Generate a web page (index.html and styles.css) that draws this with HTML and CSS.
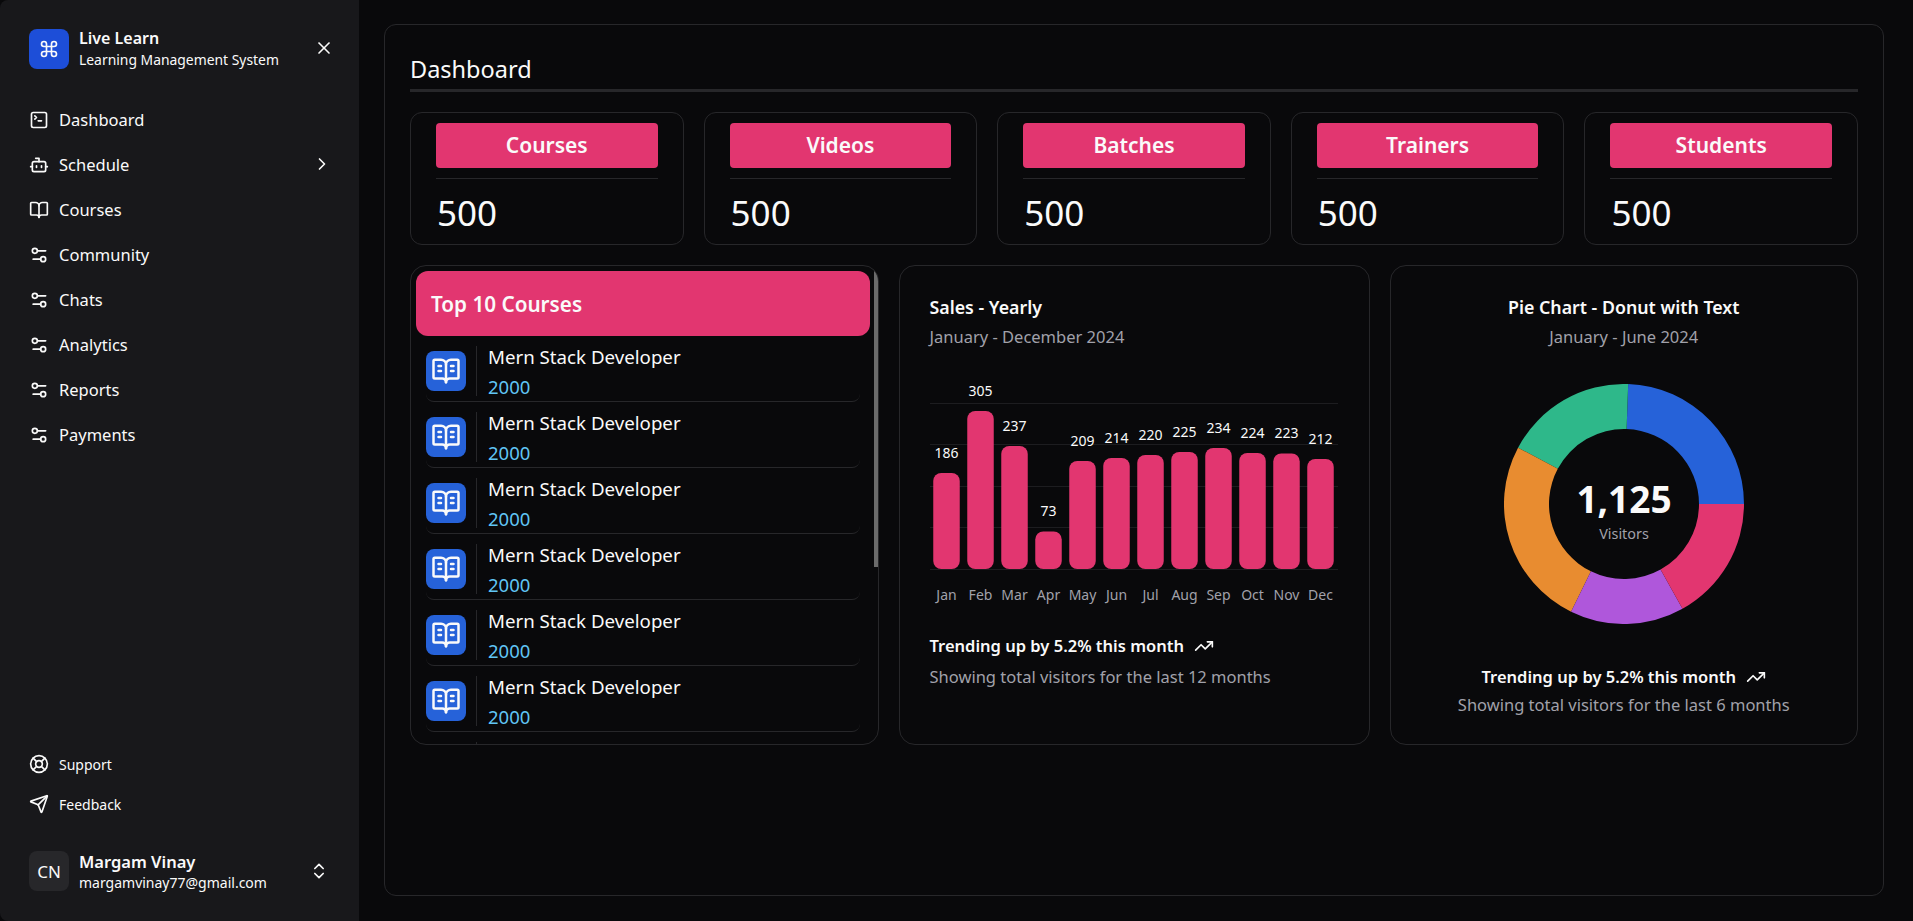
FILE: index.html
```html
<!DOCTYPE html>
<html lang="en">
<head>
<meta charset="utf-8">
<title>Live Learn - Dashboard</title>
<link rel="stylesheet" href="styles.css">
</head>
<body>
<svg class="sprite" aria-hidden="true">
  <symbol id="i-command" viewBox="0 0 24 24"><path d="M15 6v12a3 3 0 1 0 3-3H6a3 3 0 1 0 3 3V6a3 3 0 1 0-3 3h12a3 3 0 1 0-3-3"/></symbol>
  <symbol id="i-x" viewBox="0 0 24 24"><path d="M18 6 6 18"/><path d="m6 6 12 12"/></symbol>
  <symbol id="i-terminal" viewBox="0 0 24 24"><path d="m7 11 2-2-2-2"/><path d="M11 13h4"/><rect width="18" height="18" x="3" y="3" rx="2"/></symbol>
  <symbol id="i-bot" viewBox="0 0 24 24"><path d="M12 8V4H8"/><rect width="16" height="12" x="4" y="8" rx="2"/><path d="M2 14h2"/><path d="M20 14h2"/><path d="M15 13v2"/><path d="M9 13v2"/></symbol>
  <symbol id="i-book" viewBox="0 0 24 24"><path d="M12 7v14"/><path d="M3 18a1 1 0 0 1-1-1V4a1 1 0 0 1 1-1h5a4 4 0 0 1 4 4 4 4 0 0 1 4-4h5a1 1 0 0 1 1 1v13a1 1 0 0 1-1 1h-6a3 3 0 0 0-3 3 3 3 0 0 0-3-3z"/></symbol>
  <symbol id="i-booktext" viewBox="0 0 24 24"><path d="M12 7v14"/><path d="M16 12h2"/><path d="M16 8h2"/><path d="M3 18a1 1 0 0 1-1-1V4a1 1 0 0 1 1-1h5a4 4 0 0 1 4 4 4 4 0 0 1 4-4h5a1 1 0 0 1 1 1v13a1 1 0 0 1-1 1h-6a3 3 0 0 0-3 3 3 3 0 0 0-3-3z"/><path d="M6 12h2"/><path d="M6 8h2"/></symbol>
  <symbol id="i-settings" viewBox="0 0 24 24"><path d="M20 7h-9"/><path d="M14 17H5"/><circle cx="17" cy="17" r="3"/><circle cx="7" cy="7" r="3"/></symbol>
  <symbol id="i-right" viewBox="0 0 24 24"><path d="m9 18 6-6-6-6"/></symbol>
  <symbol id="i-buoy" viewBox="0 0 24 24"><circle cx="12" cy="12" r="10"/><path d="m4.93 4.93 4.24 4.24"/><path d="m14.83 9.17 4.24-4.24"/><path d="m14.83 14.83 4.24 4.24"/><path d="m9.17 14.83-4.24 4.24"/><circle cx="12" cy="12" r="4"/></symbol>
  <symbol id="i-send" viewBox="0 0 24 24"><path d="M14.536 21.686a.5.5 0 0 0 .937-.024l6.5-19a.496.496 0 0 0-.635-.635l-19 6.5a.5.5 0 0 0-.024.937l7.93 3.18a2 2 0 0 1 1.112 1.11z"/><path d="m21.854 2.147-10.94 10.939"/></symbol>
  <symbol id="i-updown" viewBox="0 0 24 24"><path d="m7 15 5 5 5-5"/><path d="m7 9 5-5 5 5"/></symbol>
  <symbol id="i-trend" viewBox="0 0 24 24"><path d="M16 7h6v6"/><path d="m22 7-8.5 8.5-5-5L2 17"/></symbol>
</svg>

<div class="app">
  <aside class="sidebar">
    <header class="brand">
      <span class="brand-logo"><svg class="ico ico-20"><use href="#i-command"/></svg></span>
      <div class="brand-text">
        <strong class="who-title">Live Learn</strong>
        <span class="who-sub">Learning Management System</span>
      </div>
      <svg class="ico ico-20 brand-close"><use href="#i-x"/></svg>
    </header>

    <nav class="nav">
      <a class="nav-item"><svg class="ico ico-20"><use href="#i-terminal"/></svg>Dashboard</a>
      <a class="nav-item"><svg class="ico ico-20"><use href="#i-bot"/></svg>Schedule<svg class="ico ico-20 nav-arrow"><use href="#i-right"/></svg></a>
      <a class="nav-item"><svg class="ico ico-20"><use href="#i-book"/></svg>Courses</a>
      <a class="nav-item"><svg class="ico ico-20"><use href="#i-settings"/></svg>Community</a>
      <a class="nav-item"><svg class="ico ico-20"><use href="#i-settings"/></svg>Chats</a>
      <a class="nav-item"><svg class="ico ico-20"><use href="#i-settings"/></svg>Analytics</a>
      <a class="nav-item"><svg class="ico ico-20"><use href="#i-settings"/></svg>Reports</a>
      <a class="nav-item"><svg class="ico ico-20"><use href="#i-settings"/></svg>Payments</a>
    </nav>

    <div class="nav-secondary">
      <a class="nav-small"><svg class="ico ico-20"><use href="#i-buoy"/></svg>Support</a>
      <a class="nav-small"><svg class="ico ico-20"><use href="#i-send"/></svg>Feedback</a>
    </div>

    <footer class="user">
      <span class="avatar">CN</span>
      <div class="brand-text user-text">
        <strong class="who-title user-name">Margam Vinay</strong>
        <span class="who-sub user-mail">margamvinay77@gmail.com</span>
      </div>
      <svg class="ico ico-20 user-toggle"><use href="#i-updown"/></svg>
    </footer>
  </aside>

  <main class="main">
    <section class="panel">
      <h1 class="page-title">Dashboard</h1>

      <div class="stats">
        <article class="stat"><h2 class="stat-label">Courses</h2><p class="stat-value">500</p></article>
        <article class="stat"><h2 class="stat-label">Videos</h2><p class="stat-value">500</p></article>
        <article class="stat"><h2 class="stat-label">Batches</h2><p class="stat-value">500</p></article>
        <article class="stat"><h2 class="stat-label">Trainers</h2><p class="stat-value">500</p></article>
        <article class="stat"><h2 class="stat-label">Students</h2><p class="stat-value">500</p></article>
      </div>

      <div class="widgets">
        <article class="card courses">
          <span class="scroll-thumb"></span>
          <h2 class="courses-head">Top 10 Courses</h2>
          <ul class="course-list">
            <li class="course"><span class="course-icon"><svg class="ico ico-30"><use href="#i-booktext"/></svg></span><div class="course-text"><span class="course-name">Mern Stack Developer</span><span class="course-count">2000</span></div></li>
            <li class="course"><span class="course-icon"><svg class="ico ico-30"><use href="#i-booktext"/></svg></span><div class="course-text"><span class="course-name">Mern Stack Developer</span><span class="course-count">2000</span></div></li>
            <li class="course"><span class="course-icon"><svg class="ico ico-30"><use href="#i-booktext"/></svg></span><div class="course-text"><span class="course-name">Mern Stack Developer</span><span class="course-count">2000</span></div></li>
            <li class="course"><span class="course-icon"><svg class="ico ico-30"><use href="#i-booktext"/></svg></span><div class="course-text"><span class="course-name">Mern Stack Developer</span><span class="course-count">2000</span></div></li>
            <li class="course"><span class="course-icon"><svg class="ico ico-30"><use href="#i-booktext"/></svg></span><div class="course-text"><span class="course-name">Mern Stack Developer</span><span class="course-count">2000</span></div></li>
            <li class="course"><span class="course-icon"><svg class="ico ico-30"><use href="#i-booktext"/></svg></span><div class="course-text"><span class="course-name">Mern Stack Developer</span><span class="course-count">2000</span></div></li>
            <li class="course"><span class="course-icon"></span><div class="course-text"></div></li>
          </ul>
        </article>

        <article class="card chart-card">
          <h2 class="chart-title">Sales - Yearly</h2>
          <p class="chart-sub">January - December 2024</p>
          <svg class="bars" viewBox="0 0 409 265" width="409" height="265">
            <g class="grid">
              <path d="M0 43.5H408"/><path d="M0 84.5H408"/><path d="M0 126.5H408"/><path d="M0 167.5H408"/><path d="M0 209.5H408"/>
            </g>
            <g class="bar">
              <rect x="3.25" y="113" width="26.5" height="96" rx="8"/>
              <rect x="37.25" y="51" width="26.5" height="158" rx="8"/>
              <rect x="71.25" y="86" width="26.5" height="123" rx="8"/>
              <rect x="105.25" y="171.5" width="26.5" height="37.5" rx="8"/>
              <rect x="139.25" y="101" width="26.5" height="108" rx="8"/>
              <rect x="173.25" y="98" width="26.5" height="111" rx="8"/>
              <rect x="207.25" y="95" width="26.5" height="114" rx="8"/>
              <rect x="241.25" y="92" width="26.5" height="117" rx="8"/>
              <rect x="275.25" y="88" width="26.5" height="121" rx="8"/>
              <rect x="309.25" y="93" width="26.5" height="116" rx="8"/>
              <rect x="343.25" y="93.5" width="26.5" height="115.5" rx="8"/>
              <rect x="377.25" y="99" width="26.5" height="110" rx="8"/>
            </g>
            <g class="bar-value">
              <text x="16.5" y="98">186</text><text x="50.5" y="36">305</text><text x="84.5" y="71">237</text><text x="118.5" y="156">73</text>
              <text x="152.5" y="86">209</text><text x="186.5" y="83">214</text><text x="220.5" y="80">220</text><text x="254.5" y="77">225</text>
              <text x="288.5" y="73">234</text><text x="322.5" y="78">224</text><text x="356.5" y="78">223</text><text x="390.5" y="84">212</text>
            </g>
            <g class="bar-month">
              <text x="16.5" y="240">Jan</text><text x="50.5" y="240">Feb</text><text x="84.5" y="240">Mar</text><text x="118.5" y="240">Apr</text>
              <text x="152.5" y="240">May</text><text x="186.5" y="240">Jun</text><text x="220.5" y="240">Jul</text><text x="254.5" y="240">Aug</text>
              <text x="288.5" y="240">Sep</text><text x="322.5" y="240">Oct</text><text x="356.5" y="240">Nov</text><text x="390.5" y="240">Dec</text>
            </g>
          </svg>
          <p class="trend">Trending up by 5.2% this month <svg class="ico ico-20"><use href="#i-trend"/></svg></p>
          <p class="chart-sub">Showing total visitors for the last 12 months</p>
        </article>

        <article class="card chart-card pie-card">
          <h2 class="chart-title">Pie Chart - Donut with Text</h2>
          <p class="chart-sub">January - June 2024</p>
          <svg class="donut" viewBox="-120 -120 240 240" width="240" height="240">
            <path class="seg-blue" d="M120 0A120 120 0 0 0 4.19 -119.93L2.62 -74.95A75 75 0 0 1 75 0Z"/>
            <path class="seg-green" d="M4.19 -119.93A120 120 0 0 0 -105.96 -56.34L-66.22 -35.21A75 75 0 0 1 2.62 -74.95Z"/>
            <path class="seg-orange" d="M-105.96 -56.34A120 120 0 0 0 -52.91 107.71L-33.07 67.32A75 75 0 0 1 -66.22 -35.21Z"/>
            <path class="seg-purple" d="M-52.91 107.71A120 120 0 0 0 58.5 104.78L36.56 65.49A75 75 0 0 1 -33.07 67.32Z"/>
            <path class="seg-pink" d="M58.5 104.78A120 120 0 0 0 120 0L75 0A75 75 0 0 1 36.56 65.49Z"/>
            <text class="donut-num" x="0" y="9">1,125</text>
            <text class="donut-label" x="0" y="35">Visitors</text>
          </svg>
          <p class="trend">Trending up by 5.2% this month <svg class="ico ico-20"><use href="#i-trend"/></svg></p>
          <p class="chart-sub">Showing total visitors for the last 6 months</p>
        </article>
      </div>
    </section>
  </main>
</div>
</body>
</html>
```

FILE: styles.css
```css
* { box-sizing: border-box; }

html, body { height: 100%; }

body {
  margin: 0;
  background: #09090b;
  color: #fafafa;
  font-family: "Noto Sans", "Open Sans", sans-serif;
  overflow: hidden;
}

h1, h2, p, ul { margin: 0; padding: 0; }
ul { list-style: none; }

.sprite { display: none; }

.ico {
  fill: none;
  stroke: currentColor;
  stroke-width: 2;
  stroke-linecap: round;
  stroke-linejoin: round;
  flex: none;
}
.ico-20 { width: 20px; height: 20px; }
.ico-30 { width: 30px; height: 30px; }

.app { display: flex; height: 921px; }

/* Sidebar */
.sidebar {
  width: 359px;
  flex: none;
  display: flex;
  flex-direction: column;
  background: #18181b;
  border-radius: 8px 0 0 8px;
  padding: 28px 29px 30px;
}

.brand, .user { display: flex; align-items: center; }

.brand-logo, .avatar {
  width: 40px;
  height: 40px;
  border-radius: 8px;
  display: flex;
  align-items: center;
  justify-content: center;
  flex: none;
}
.brand-logo { background: #1d4ed8; }
.avatar { background: #27272a; font-size: 17px; }

.brand-text { margin-left: 10px; display: flex; flex-direction: column; }
.who-title { font-size: 16px; line-height: 21px; font-weight: 600; }
.who-sub { font-size: 13.9px; line-height: 21px; }
.user-text { padding-top: 1px; }
.user-name { font-size: 16.5px; }
.user-mail { font-size: 14px; }

.brand-close { margin-left: auto; margin-right: -4px; margin-top: -2px; }

.nav { margin-top: 27px; display: flex; flex-direction: column; }
.nav-item {
  height: 45px;
  display: flex;
  align-items: center;
  gap: 10px;
  font-size: 16.5px;
}
.nav-arrow { margin-left: auto; margin-right: -2px; margin-top: -2px; }

.nav-secondary { margin-top: auto; display: flex; flex-direction: column; }
.nav-small {
  height: 40px;
  display: flex;
  align-items: center;
  gap: 10px;
  font-size: 14px;
}

.user { margin-top: 27px; height: 40px; }
.user-toggle { margin-left: auto; margin-right: 1px; }

/* Main */
.main { flex: 1; min-width: 0; padding: 24px 29px 25px 25px; }

.panel {
  height: 100%;
  border: 1px solid #27272a;
  border-radius: 12px;
  padding: 25px 25px 0;
}

.page-title {
  font-size: 23.5px;
  line-height: 34px;
  font-weight: 400;
  height: 40px;
  border-bottom: 3px solid #27272a;
  margin-top: 2px;
}

.stats {
  margin-top: 20px;
  display: grid;
  grid-template-columns: repeat(5, 1fr);
  gap: 20px;
}
.stat {
  height: 133px;
  border: 1px solid #27272a;
  border-radius: 12px;
  padding: 10px 25px 0;
}
.stat-label {
  height: 45px;
  border-radius: 4px;
  background: #e23670;
  font-size: 21px;
  font-weight: 600;
  line-height: 45px;
  text-align: center;
}
.stat-value {
  margin-top: 10px;
  padding: 10px 1px 0;
  border-top: 1px solid #27272a;
  font-size: 35px;
  line-height: 48px;
}

.widgets {
  margin-top: 20px;
  display: grid;
  grid-template-columns: repeat(3, 1fr);
  gap: 20px;
}

.card {
  height: 480px;
  border: 1px solid #27272a;
  border-radius: 16px;
}

.courses {
  position: relative;
  padding: 5px 8px 0 5px;
  overflow: hidden;
}
.scroll-thumb {
  position: absolute;
  top: 0;
  right: 0;
  width: 4px;
  height: 301px;
  background: #6b6b6b;
}

.courses-head {
  height: 65px;
  border-radius: 12px;
  background: #e23670;
  padding: 0 15px;
  font-size: 20.7px;
  line-height: 67px;
  font-weight: 600;
}

.course-list { margin: 0 10px; }
.course {
  height: 66px;
  padding: 10px 0 5px;
  display: flex;
  align-items: flex-start;
  border-bottom: 1px solid #27272a;
  border-radius: 0 0 8px 8px;
}
.course-icon {
  width: 40px;
  height: 40px;
  margin-top: 5px;
  border-radius: 8px;
  background: #2662d9;
  display: flex;
  align-items: center;
  justify-content: center;
  flex: none;
}
.course-text {
  margin-left: 10px;
  height: 50px;
  padding-left: 11px;
  border-left: 1px solid #27272a;
  display: flex;
  flex-direction: column;
  gap: 8px;
}
.course-name { font-size: 18.7px; line-height: 22px; }
.course-count { font-size: 18.5px; line-height: 22px; color: #60c5f5; }

.chart-card { padding: 29px 30px 0; }

.chart-title { font-size: 17.8px; line-height: 24px; font-weight: 600; }
.chart-sub {
  margin-top: 6px;
  font-size: 16.5px;
  line-height: 24px;
  color: #a1a1aa;
}

.bars { display: block; margin-top: 11px; }
.grid path { stroke: #1d1d20; stroke-width: 1; fill: none; }
.bar rect { fill: #e23670; }
.bar-value text { fill: #fafafa; font-size: 14px; text-anchor: middle; }
.bar-month text { fill: #a1a1aa; font-size: 14px; text-anchor: middle; }

.trend {
  margin-top: 9px;
  display: flex;
  align-items: center;
  gap: 10px;
  font-size: 16.5px;
  line-height: 24px;
  font-weight: 600;
}
.trend + .chart-sub { margin-top: 7px; }

.pie-card { text-align: center; display: flex; flex-direction: column; align-items: center; }
.pie-card .trend { margin-top: 41px; }
.pie-card .trend + .chart-sub { margin-top: 4px; }
.donut { display: block; margin-top: 35px; }

.seg-blue { fill: #2662d9; }
.seg-green { fill: #2eb88a; }
.seg-orange { fill: #e88c30; }
.seg-purple { fill: #af57db; }
.seg-pink { fill: #e23670; }

.donut-num { fill: #fafafa; font-size: 37px; font-weight: 700; text-anchor: middle; }
.donut-label { fill: #a1a1aa; font-size: 14.4px; text-anchor: middle; }
```
